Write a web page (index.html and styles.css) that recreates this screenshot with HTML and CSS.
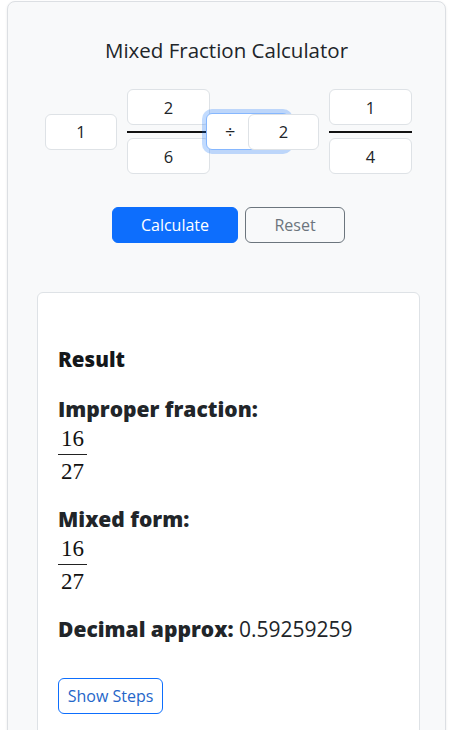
FILE: index.html
```html
<!DOCTYPE html>
<html lang="en">
<head>
<meta charset="utf-8">
<title>Mixed Fraction Calculator</title>
<link rel="stylesheet" href="styles.css">
</head>
<body>
<div class="calc">
  <h2 class="title">Mixed Fraction Calculator</h2>
  <div class="inputs">
    <input class="field whole" type="text" value="1">
    <div class="frac">
      <input class="field part" type="text" value="2">
      <div class="bar"></div>
      <input class="field part" type="text" value="6">
    </div>
    <div class="op">÷</div>
    <input class="field whole whole2" type="text" value="2">
    <div class="frac frac2">
      <input class="field part" type="text" value="1">
      <div class="bar"></div>
      <input class="field part" type="text" value="4">
    </div>
  </div>
  <div class="actions">
    <button class="btn btn-primary" type="button">Calculate</button>
    <button class="btn btn-secondary" type="button">Reset</button>
  </div>
  <div class="result">
    <h5 class="result-title">Result</h5>
    <div class="label">Improper fraction:</div>
    <div class="mfrac"><span class="num">16</span><span class="line"></span><span class="den">27</span></div>
    <div class="label label-gap">Mixed form:</div>
    <div class="mfrac"><span class="num">16</span><span class="line"></span><span class="den">27</span></div>
    <div class="label label-gap"><b>Decimal approx:</b> <span class="value">0.59259259</span></div>
    <button class="btn btn-outline" type="button">Show Steps</button>
  </div>
</div>
</body>
</html>
```
FILE: styles.css
```css
html, body {
  margin: 0;
  padding: 0;
  height: 730px;
  overflow: hidden;
  background: #ffffff;
}

body {
  font-family: "Open Sans", "Noto Sans", sans-serif;
  color: #212529;
}

.calc {
  margin: 1px 0 0 7px;
  width: 437px;
  height: 900px;
  background: #f8f9fa;
  border: 1px solid #dcdfe3;
  border-radius: 8px;
  box-shadow: 0 1px 3px rgba(0, 0, 0, 0.08);
  box-sizing: content-box;
}

.title {
  margin: 34px 0 0;
  font-size: 20.5px;
  font-weight: 400;
  line-height: 28px;
  text-align: center;
  color: #212529;
}

.inputs {
  display: flex;
  align-items: center;
  justify-content: center;
  margin-top: 25px;
  padding-left: 4px;
}

.field {
  box-sizing: border-box;
  height: 36px;
  border: 1px solid #dee2e6;
  border-radius: 6px;
  background: #fff;
  font-family: inherit;
  font-size: 16.5px;
  color: #212529;
  text-align: center;
  padding: 0;
  outline: none;
}

.whole {
  width: 72px;
  margin-right: 10px;
}

.whole2 {
  width: 71px;
  margin-left: -41px;
  margin-right: 10px;
  position: relative;
  z-index: 2;
}

.frac {
  display: flex;
  flex-direction: column;
  width: 83px;
}

.part {
  width: 83px;
}

.bar {
  height: 2px;
  background: #111;
  margin: 6px 0 5px;
}

.op {
  box-sizing: border-box;
  width: 83px;
  height: 37px;
  margin-left: -4px;
  position: relative;
  z-index: 1;
  background: #fff;
  border: 1px solid #86b7fe;
  border-radius: 6px;
  box-shadow: 0 0 0 4px rgba(13, 110, 253, 0.25);
  font-size: 18px;
  line-height: 35px;
  padding-left: 18px;
  color: #212529;
}

.actions {
  display: flex;
  justify-content: center;
  gap: 7px;
  margin-top: 33px;
  padding-left: 4px;
}

.btn {
  box-sizing: border-box;
  height: 36px;
  border-radius: 6px;
  font-family: inherit;
  font-size: 16px;
  padding: 0 12px;
  cursor: pointer;
}

.btn-primary {
  width: 126px;
  background: #0d6efd;
  border: 1px solid #0d6efd;
  color: #fff;
}

.btn-secondary {
  width: 100px;
  background: transparent;
  border: 1px solid #6c757d;
  color: #6c757d;
}

.result {
  margin: 49px 25px 0 29px;
  background: #fff;
  border: 1px solid #dee2e6;
  border-radius: 6px;
  padding: 54px 20px 30px;
  height: 600px;
}

.result-title {
  margin: 0;
  font-size: 20.5px;
  font-weight: 800;
  line-height: 24px;
  color: #14171a;
}

.label {
  margin-top: 26px;
  font-size: 21px;
  font-weight: 800;
  line-height: 24px;
  color: #212529;
}

.label-gap {
  margin-top: 24px;
}

.label b {
  font-weight: 800;
}

.value {
  font-weight: 400;
}

.mfrac {
  display: inline-flex;
  flex-direction: column;
  align-items: center;
  margin-top: 6px;
  font-family: "Liberation Serif", "DejaVu Serif", serif;
  font-size: 23px;
  line-height: 23px;
  color: #111;
  vertical-align: top;
}

.mfrac .num,
.mfrac .den {
  display: block;
  padding: 0 3px;
}

.mfrac .line {
  display: block;
  align-self: stretch;
  height: 1px;
  background: #222;
  margin: 4px 0 5px;
}

.btn-outline {
  display: block;
  margin-top: 37px;
  width: 105px;
  background: #fff;
  border: 1px solid #0d6efd;
  color: #2566c9;
  padding: 0;
}
```
